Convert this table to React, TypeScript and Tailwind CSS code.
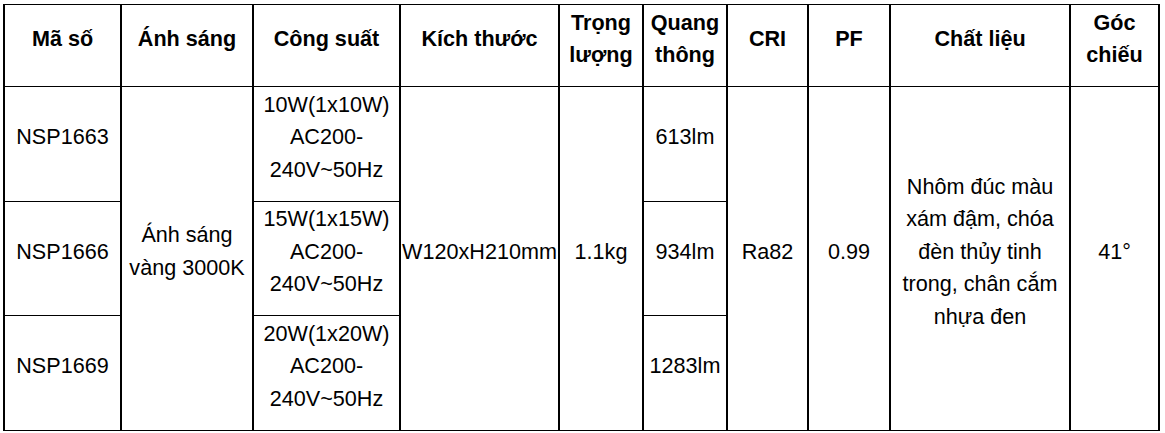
import React from "react";

const th = "border-x-2 border-y border-black px-[2px] pb-[13px] font-bold text-center align-middle";
const td = "border-x-2 border-y border-black px-[2px] pb-[13px] text-center align-middle";

const rows = [
  { code: "NSP1663", power: "10W(1x10W)", lm: "613lm" },
  { code: "NSP1666", power: "15W(1x15W)", lm: "934lm" },
  { code: "NSP1669", power: "20W(1x20W)", lm: "1283lm" },
];

export default function App() {
  return (
    <div className="bg-white w-[1165px] h-[433px] pl-[3px] pt-[4px] text-black" style={{ fontFamily: '"Liberation Sans", Arial, sans-serif' }}>
      <table className="table-fixed border-collapse text-[21.6px] leading-[32.5px] w-[1157px]">
        <colgroup>
          <col className="w-[117px]" />
          <col className="w-[132px]" />
          <col className="w-[147px]" />
          <col className="w-[159px]" />
          <col className="w-[84px]" />
          <col className="w-[84px]" />
          <col className="w-[81px]" />
          <col className="w-[82px]" />
          <col className="w-[180px]" />
          <col className="w-[89px]" />
        </colgroup>
        <thead>
          <tr className="h-[82px]">
            <th className={th}>Mã số</th>
            <th className={th}>Ánh sáng</th>
            <th className={th}>Công suất</th>
            <th className={th}>Kích thước</th>
            <th className={th}>Trọng lượng</th>
            <th className={th}>Quang thông</th>
            <th className={th}>CRI</th>
            <th className={th}>PF</th>
            <th className={th}>Chất liệu</th>
            <th className={th}>Góc chiếu</th>
          </tr>
        </thead>
        <tbody>
          {rows.map((r, i) => (
            <tr key={r.code} className="h-[114.5px]">
              <td className={td}>{r.code}</td>
              {i === 0 && (
                <td rowSpan={3} className={td}>
                  Ánh sáng
                  <br />
                  vàng 3000K
                </td>
              )}
              <td className={td}>
                {r.power}
                <br />
                AC200-
                <br />
                240V~50Hz
              </td>
              {i === 0 && (
                <>
                  <td rowSpan={3} className={`${td} !px-0`}>W120xH210mm</td>
                  <td rowSpan={3} className={td}>1.1kg</td>
                </>
              )}
              <td className={td}>{r.lm}</td>
              {i === 0 && (
                <>
                  <td rowSpan={3} className={td}>Ra82</td>
                  <td rowSpan={3} className={td}>0.99</td>
                  <td rowSpan={3} className={td}>
                    Nhôm đúc màu
                    <br />
                    xám đậm, chóa
                    <br />
                    đèn thủy tinh
                    <br />
                    trong, chân cắm
                    <br />
                    nhựa đen
                  </td>
                  <td rowSpan={3} className={td}>41°</td>
                </>
              )}
            </tr>
          ))}
        </tbody>
      </table>
    </div>
  );
}
